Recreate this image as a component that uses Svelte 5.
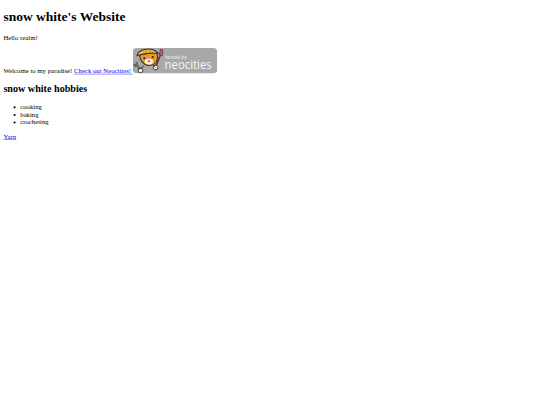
<script>
	const hobbies = ['cooking', 'baking', 'crocheting'];
</script>

<main>
	<h1>snow white's Website</h1>
	<p>Hello realm!</p>
	<p>
		Welcome to my paradise!
		<a href="#neocities">Check out Neocities!
			<svg class="badge" viewBox="0 0 200 60" width="200" height="60" role="img" aria-label="hosted by neocities">
				<rect x="0" y="0" width="200" height="60" rx="9" fill="#a8a8a8" />
				<text x="76" y="26" class="small" textLength="54" lengthAdjust="spacingAndGlyphs">hosted by.</text>
				<text x="75" y="50" class="big" textLength="112" lengthAdjust="spacingAndGlyphs">neocities</text>
				<!-- brush -->
				<path d="M54 44 L66 14" stroke="#5a3a32" stroke-width="4" fill="none" />
				<path d="M63 16 L65 3 L71 4 L70 18 Z" fill="#c0566e" stroke="#5a3030" stroke-width="1.5" />
				<circle cx="54" cy="46" r="5.5" fill="#fff" stroke="#222" stroke-width="2" />
				<!-- wrench -->
				<path d="M8 38 L16 50" stroke="#666" stroke-width="5" fill="none" />
				<path d="M2 38 L7 45 M11 33 L5 41" stroke="#666" stroke-width="4" fill="none" />
				<circle cx="18" cy="53" r="5.5" fill="#fff" stroke="#222" stroke-width="2" />
				<!-- arm -->
				<path d="M16 50 L26 42 M54 46 L46 38" stroke="#222" stroke-width="2" fill="none" />
				<!-- head -->
				<path d="M16 16 C18 38 36 46 50 38 C60 32 60 18 56 10 Z" fill="#ee9435" stroke="#333" stroke-width="2.5" />
				<ellipse cx="38" cy="32" rx="10" ry="7" fill="#fff3dc" />
				<circle cx="27" cy="24" r="2.5" fill="#222" />
				<circle cx="47" cy="21" r="2.5" fill="#222" />
				<path d="M38 28 v6 M35 31 h6" stroke="#a33" stroke-width="2" />
				<!-- hard hat -->
				<path d="M10 18 C12 4 40 -3 54 7 L60 13 C42 10 24 13 10 18 Z" fill="#eebb35" stroke="#333" stroke-width="2.5" />
				<path d="M30 5 L33 13 M40 3 L42 11" stroke="#a87a20" stroke-width="2" />
			</svg>
		</a>
	</p>
	<h2>snow white hobbies</h2>
	<ul>
		{#each hobbies as hobby}
			<li>{hobby}</li>
		{/each}
	</ul>
	<p><a href="#yarn">Yarn</a></p>
</main>

<style>
	:global(body) {
		background: #fff;
	}
	main {
		/* the whole page is a 1280px layout shrunk to the 540px window */
		display: flow-root;
		width: 1280px;
		box-sizing: border-box;
		padding: 0 8px;
		transform: scale(0.421875);
		transform-origin: 0 0;
		font-family: "Liberation Serif", "Times New Roman", serif;
		font-size: 16px;
		color: #000;
	}
	h1 {
		font-size: 32px;
		margin: 21.44px 0;
	}
	p {
		margin: 16px 0;
	}
	h2 {
		font-size: 24px;
		margin: 19.92px 0;
	}
	ul {
		margin: 16px 0;
		padding-left: 40px;
	}
	a {
		color: #00e;
	}
	.badge {
		vertical-align: baseline;
	}
	.small {
		font-family: "Open Sans", sans-serif;
		font-size: 14px;
		fill: #f0f0f0;
	}
	.big {
		font-family: "Open Sans", sans-serif;
		font-size: 31px;
		fill: #f6f6f6;
	}
</style>
